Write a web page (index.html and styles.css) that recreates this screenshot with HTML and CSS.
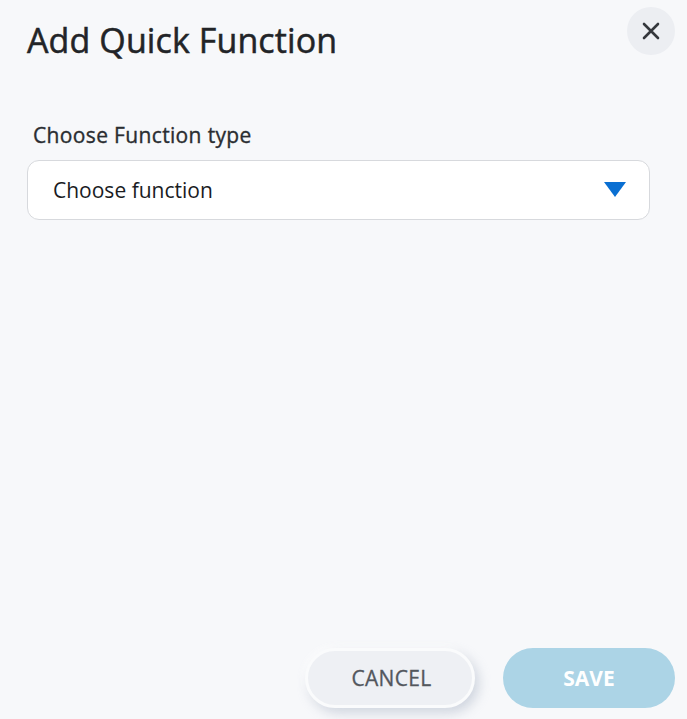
FILE: index.html
```html
<!DOCTYPE html>
<html>
<head>
<meta charset="utf-8">
<link rel="stylesheet" href="styles.css">
</head>
<body>
<div class="dialog">
  <header class="head">
    <h1 class="title">Add Quick Function</h1>
    <button class="close" aria-label="Close">
      <svg width="18" height="18" viewBox="0 0 18 18"><path d="M2 2L16 16M16 2L2 16" stroke="#34373c" stroke-width="2.6" stroke-linecap="round"/></svg>
    </button>
  </header>
  <div class="field">
    <label class="label">Choose Function type</label>
    <div class="select">
      <span class="placeholder">Choose function</span>
      <svg class="caret" width="22" height="15" viewBox="0 0 22 15"><path d="M0 0H22L11 15Z" fill="#0a6fd2"/></svg>
    </div>
  </div>
  <div class="spacer"></div>
  <footer class="actions">
    <button class="btn cancel">CANCEL</button>
    <button class="btn save">SAVE</button>
  </footer>
</div>
</body>
</html>
```
FILE: styles.css
```css
* { box-sizing: border-box; }
html, body { margin: 0; padding: 0; height: 100%; }
body {
  background: #f7f8fa;
  font-family: "Open Sans", "Noto Sans", sans-serif;
  color: #1f2124;
}
.dialog {
  height: 719px;
  display: flex;
  flex-direction: column;
  padding: 7px 12px 11px 27px;
}
.head {
  display: flex;
  justify-content: space-between;
  align-items: flex-start;
  height: 48px;
}
.title {
  margin: 0;
  font-size: 34px;
  font-weight: 400;
  -webkit-text-stroke: 0.5px #222427;
  letter-spacing: 0.1px;
  line-height: 44px;
  padding-top: 11px;
  color: #222427;
}
.close {
  width: 48px;
  height: 48px;
  border-radius: 50%;
  border: none;
  background: #eceef2;
  display: flex;
  align-items: center;
  justify-content: center;
  padding: 0;
  margin-right: 0;
}
.field {
  margin-top: 66px;
  padding-right: 25px;
}
.label {
  display: block;
  font-size: 21px;
  font-weight: 400;
  -webkit-text-stroke: 0.35px #2a2d31;
  letter-spacing: 0.35px;
  line-height: 28px;
  padding-left: 6px;
  color: #2a2d31;
}
.select {
  margin-top: 11px;
  height: 60px;
  background: #ffffff;
  border: 1px solid #d7d9dd;
  border-radius: 12px;
  display: flex;
  align-items: center;
  justify-content: space-between;
  padding: 0 23px 0 25px;
}
.placeholder {
  font-size: 21px;
  color: #1a1c1f;
}
.caret { display: block; margin-top: -2px; }
.spacer { flex: 1; }
.actions {
  display: flex;
  justify-content: flex-end;
  gap: 28px;
}
.btn {
  height: 60px;
  border-radius: 30px;
  border: none;
  font-family: inherit;
  font-size: 21px;
  padding: 0;
}
.cancel {
  width: 170px;
  background: #eef0f4;
  color: #53575d;
  font-weight: 400;
  -webkit-text-stroke: 0.3px #53575d;
  letter-spacing: 0.3px;
  padding-left: 3px;
  border: 3px solid #fafbfc;
  box-shadow: 4px 5px 12px rgba(160, 170, 190, 0.45), -2px -2px 6px rgba(255,255,255,0.9);
}
.save {
  width: 172px;
  background: #acd4e6;
  color: #ffffff;
  font-weight: 700;
}
```
